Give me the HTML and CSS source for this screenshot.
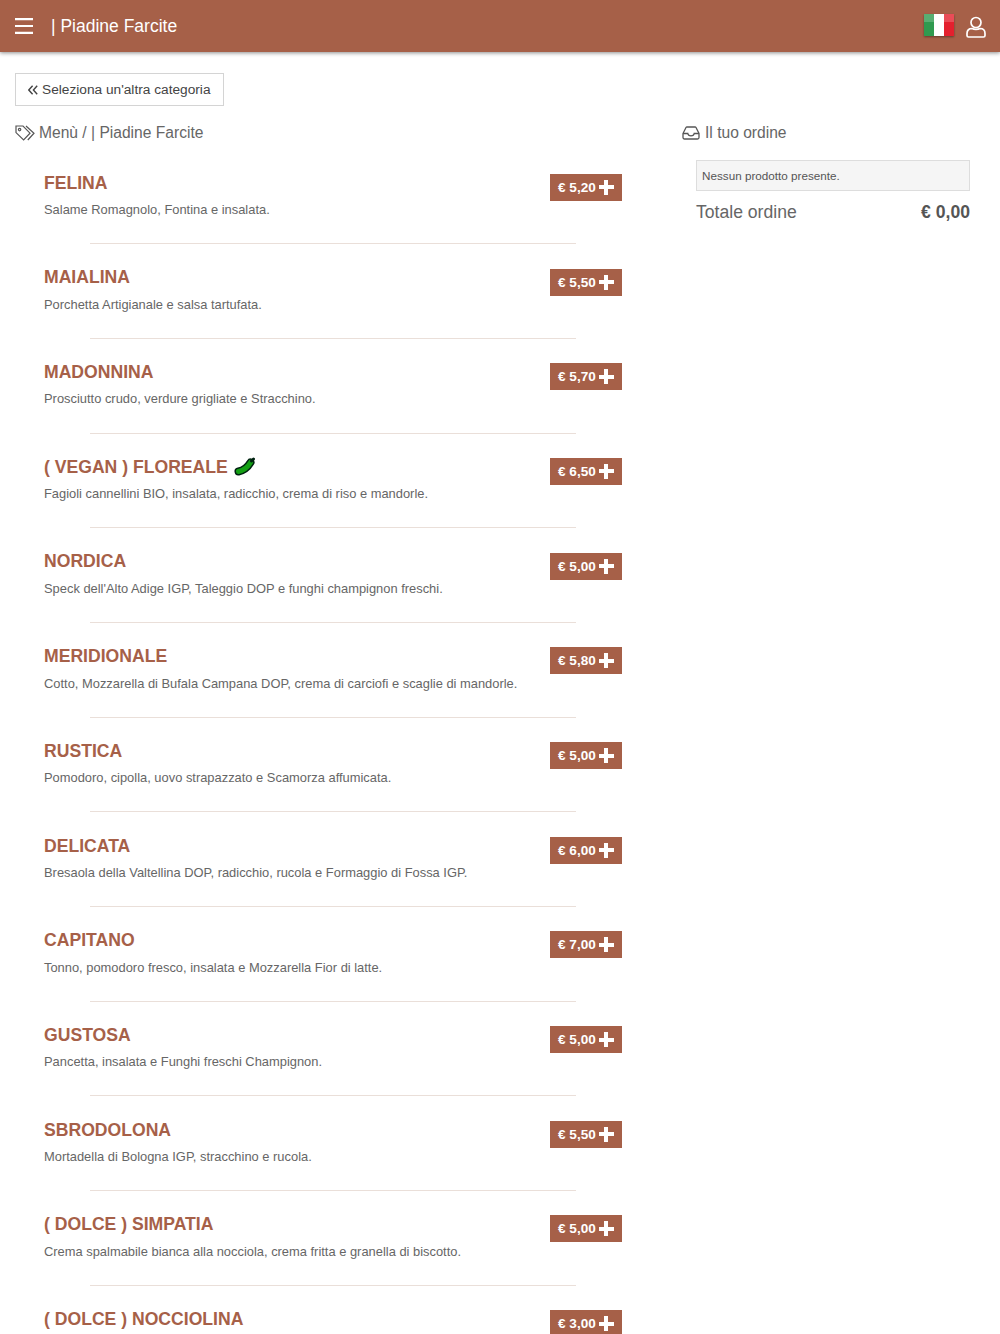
FILE: index.html
```html
<!DOCTYPE html>
<html>
<head>
    <title>Piadine Farcite</title>
    <link rel="stylesheet" href="styles.css">
</head>
<body>
    <!-- Top bar -->
    <header class="topbar">
        <svg class="menu-icon" width="18" height="16" viewBox="0 0 18 16"><path d="M0 1.2h18M0 8h18M0 14.8h18" stroke="#fff" stroke-width="2.2"/></svg>
        <div class="topbar-title">| Piadine Farcite</div>
        <svg class="flag" width="30" height="22" viewBox="0 0 30 22">
            <rect width="10" height="22" fill="#2f9a4f"/>
            <rect x="10" width="10" height="22" fill="#fff"/>
            <rect x="20" width="10" height="22" fill="#e4202e"/>
            <rect width="30" height="8" fill="#fff" opacity="0.2"/>
        </svg>
        <svg class="user-icon" width="20" height="22" viewBox="0 0 20 22" fill="none" stroke="#fff" stroke-width="1.7">
            <circle cx="10" cy="6.5" r="5"/>
            <path d="M6 12.5C3 12.5 1 14.5 1 17.5V19.5C1 20.3 1.7 21 2.5 21H17.5C18.3 21 19 20.3 19 19.5V17.5C19 14.5 17 12.5 14 12.5C12 13.6 8 13.6 6 12.5Z"/>
        </svg>
    </header>

    <div class="page">
        <div class="menu-col">
            <a class="back-btn" href="#">
                <svg width="10" height="10" viewBox="0 0 10 10" fill="none" stroke="#444" stroke-width="1.4"><path d="M4.6 0.8L0.8 5L4.6 9.2M9.2 0.8L5.4 5L9.2 9.2"/></svg>
                Seleziona un'altra categoria
            </a>
            <div class="section-title">
                <svg width="20" height="16" viewBox="0 0 20 16" fill="none" stroke="#555" stroke-width="1.2"><path d="M1 1H8L15 8.2L8.6 15L1 7.6Z"/><circle cx="4.6" cy="4.6" r="1.2"/><path d="M11 1L19 8.2L12.8 15"/></svg>
                Menù / | Piadine Farcite
            </div>

            <div class="product-list">
                <div class="product">
                    <div class="product-text">
                        <h4 class="product-name">FELINA</h4>
                        <p class="product-desc">Salame Romagnolo, Fontina e insalata.</p>
                    </div>
                    <a class="price-btn" href="#">€ 5,20 <span class="plus"></span></a>
                </div>
                <div class="product">
                    <div class="product-text">
                        <h4 class="product-name">MAIALINA</h4>
                        <p class="product-desc">Porchetta Artigianale e salsa tartufata.</p>
                    </div>
                    <a class="price-btn" href="#">€ 5,50 <span class="plus"></span></a>
                </div>
                <div class="product">
                    <div class="product-text">
                        <h4 class="product-name">MADONNINA</h4>
                        <p class="product-desc">Prosciutto crudo, verdure grigliate e Stracchino.</p>
                    </div>
                    <a class="price-btn" href="#">€ 5,70 <span class="plus"></span></a>
                </div>
                <div class="product">
                    <div class="product-text">
                        <h4 class="product-name">( VEGAN ) FLOREALE
                            <svg class="vegan-icon" width="22" height="20" viewBox="0 0 22 20" fill="none" stroke-linecap="round">
                                <path d="M4.500 14.500Q12 13 16.500 5.500" stroke="#021" stroke-width="8"/>
                                <path d="M4.500 14.500Q12 13 16.500 5.500" stroke="#14a014" stroke-width="5"/>
                                <path d="M17.500 4L19.500 2" stroke="#021" stroke-width="3"/>
                            </svg>
                        </h4>
                        <p class="product-desc">Fagioli cannellini BIO, insalata, radicchio, crema di riso e mandorle.</p>
                    </div>
                    <a class="price-btn" href="#">€ 6,50 <span class="plus"></span></a>
                </div>
                <div class="product">
                    <div class="product-text">
                        <h4 class="product-name">NORDICA</h4>
                        <p class="product-desc">Speck dell'Alto Adige IGP, Taleggio DOP e funghi champignon freschi.</p>
                    </div>
                    <a class="price-btn" href="#">€ 5,00 <span class="plus"></span></a>
                </div>
                <div class="product">
                    <div class="product-text">
                        <h4 class="product-name">MERIDIONALE</h4>
                        <p class="product-desc">Cotto, Mozzarella di Bufala Campana DOP, crema di carciofi e scaglie di mandorle.</p>
                    </div>
                    <a class="price-btn" href="#">€ 5,80 <span class="plus"></span></a>
                </div>
                <div class="product">
                    <div class="product-text">
                        <h4 class="product-name">RUSTICA</h4>
                        <p class="product-desc">Pomodoro, cipolla, uovo strapazzato e Scamorza affumicata.</p>
                    </div>
                    <a class="price-btn" href="#">€ 5,00 <span class="plus"></span></a>
                </div>
                <div class="product">
                    <div class="product-text">
                        <h4 class="product-name">DELICATA</h4>
                        <p class="product-desc">Bresaola della Valtellina DOP, radicchio, rucola e Formaggio di Fossa IGP.</p>
                    </div>
                    <a class="price-btn" href="#">€ 6,00 <span class="plus"></span></a>
                </div>
                <div class="product">
                    <div class="product-text">
                        <h4 class="product-name">CAPITANO</h4>
                        <p class="product-desc">Tonno, pomodoro fresco, insalata e Mozzarella Fior di latte.</p>
                    </div>
                    <a class="price-btn" href="#">€ 7,00 <span class="plus"></span></a>
                </div>
                <div class="product">
                    <div class="product-text">
                        <h4 class="product-name">GUSTOSA</h4>
                        <p class="product-desc">Pancetta, insalata e Funghi freschi Champignon.</p>
                    </div>
                    <a class="price-btn" href="#">€ 5,00 <span class="plus"></span></a>
                </div>
                <div class="product">
                    <div class="product-text">
                        <h4 class="product-name">SBRODOLONA</h4>
                        <p class="product-desc">Mortadella di Bologna IGP, stracchino e rucola.</p>
                    </div>
                    <a class="price-btn" href="#">€ 5,50 <span class="plus"></span></a>
                </div>
                <div class="product">
                    <div class="product-text">
                        <h4 class="product-name">( DOLCE ) SIMPATIA</h4>
                        <p class="product-desc">Crema spalmabile bianca alla nocciola, crema fritta e granella di biscotto.</p>
                    </div>
                    <a class="price-btn" href="#">€ 5,00 <span class="plus"></span></a>
                </div>
                <div class="product">
                    <div class="product-text">
                        <h4 class="product-name">( DOLCE ) NOCCIOLINA</h4>
                    </div>
                    <a class="price-btn" href="#">€ 3,00 <span class="plus"></span></a>
                </div>
            </div>
        </div>

        <!-- Order summary -->
        <aside class="order-col">
            <div class="section-title order-title">
                <svg width="18" height="14" viewBox="0 0 18 14" fill="none" stroke="#555" stroke-width="1.300"><path d="M1 7.500L4 1.500C4.200 1.100 4.600 1 5 1H13C13.400 1 13.800 1.100 14 1.500L17 7.500V11.500C17 12.300 16.300 13 15.500 13H2.500C1.700 13 1 12.300 1 11.500Z"/><path d="M1 7.500H5.800C6 9 7.200 9.800 9 9.800C10.800 9.800 12 9 12.200 7.500H17"/></svg>
                Il tuo ordine
            </div>
            <div class="order-body">
                <div class="order-empty">Nessun prodotto presente.</div>
                <div class="order-total">
                    <span>Totale ordine</span>
                    <strong>€ 0,00</strong>
                </div>
            </div>
        </aside>
    </div>
</body>
</html>
```

FILE: styles.css
```css
html, body {
    height: 1334px;
    overflow: hidden;
}
body {
    margin: 0;
    font-family: "Liberation Sans", Arial, sans-serif;
    color: #555;
    background-color: #fff;
}
.topbar {
    display: flex;
    align-items: center;
    height: 52px;
    padding: 0 14px 0 15px;
    background-color: #a66048;
    box-shadow: 0 1px 4px rgba(0,0,0,0.45);
}
.menu-icon {
    flex: none;
}
.topbar-title {
    flex: 1;
    margin-left: 18px;
    color: #fff;
    font-size: 17.5px;
}
.flag {
    margin-right: 12px;
    margin-top: -2px;
    box-shadow: 0 1px 2px rgba(0,0,0,0.4);
}
.user-icon {
    margin-top: 1px;
}
.page {
    display: flex;
    padding: 21px 30px 0 15px;
}
.menu-col {
    width: 607px;
    flex: none;
}
.back-btn {
    display: inline-flex;
    align-items: center;
    gap: 4px;
    height: 33px;
    padding: 0 12px;
    border: 1px solid #d4d4d4;
    box-sizing: border-box;
    color: #444;
    font-size: 13.7px;
    text-decoration: none;
}
.section-title {
    display: flex;
    align-items: center;
    gap: 4px;
    margin-top: 17px;
    height: 20px;
    color: #666;
    font-size: 15.6px;
}
.product-list {
    margin-top: 7.5px;
}
.product {
    position: relative;
    display: flex;
    justify-content: space-between;
    align-items: flex-start;
    height: 94.7px;
    box-sizing: border-box;
    padding: 21.7px 0 0 29px;
    width: 607px;
}
.product::after {
    content: "";
    position: absolute;
    left: 75px;
    bottom: 1px;
    width: 486px;
    height: 1px;
    background-color: #eadfd9;
}
.product-name {
    display: flex;
    align-items: center;
    gap: 6px;
    height: 22px;
    margin: 0;
    color: #a66048;
    font-size: 17.6px;
    font-weight: bold;
}
.vegan-icon {
    flex: none;
}
.product-desc {
    margin: 7.9px 0 0 0;
    font-size: 12.9px;
    line-height: 15px;
    color: #666;
}
.price-btn {
    display: flex;
    align-items: center;
    gap: 3px;
    width: 72px;
    height: 27px;
    margin-top: 1.7px;
    padding-left: 8px;
    box-sizing: border-box;
    background-color: #a66048;
    color: #fff;
    font-size: 13.6px;
    font-weight: bold;
    text-decoration: none;
    white-space: nowrap;
}
.plus {
    display: inline-block;
    width: 15px;
    height: 15px;
    background: linear-gradient(#fff, #fff) center / 15px 4px no-repeat,
                linear-gradient(#fff, #fff) center / 4px 15px no-repeat;
}
.order-col {
    flex: 1;
    margin-left: 60px;
    padding-top: 50px;
}
.order-title {
    gap: 5px;
    margin-top: 0;
}
.order-body {
    padding-left: 14px;
    margin-top: 17px;
}
.order-empty {
    display: flex;
    align-items: center;
    height: 31px;
    padding-left: 5px;
    border: 1px solid #ddd;
    box-sizing: border-box;
    background-color: #f5f5f5;
    font-size: 11.7px;
    color: #555;
}
.order-total {
    display: flex;
    justify-content: space-between;
    align-items: center;
    margin-top: 11px;
    font-size: 17.6px;
    color: #666;
}
.order-total strong {
    color: #555;
    font-size: 17.6px;
}
```
